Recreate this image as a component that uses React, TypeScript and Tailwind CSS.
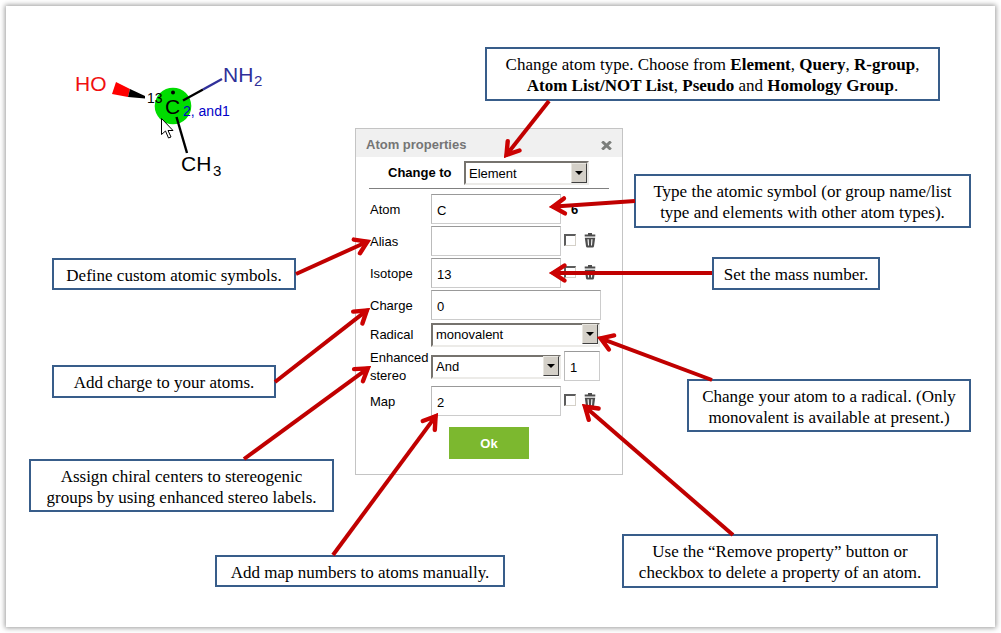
import type { ReactNode } from "react";

type Point = [number, number];

const arrows: { from: Point; to: Point }[] = [
  { from: [549, 101], to: [504, 158] },
  { from: [635, 201], to: [549, 207] },
  { from: [296, 274], to: [371, 240] },
  { from: [712, 273], to: [549, 273] },
  { from: [275, 382], to: [370, 308] },
  { from: [712, 380], to: [597, 337] },
  { from: [244, 459], to: [371, 366] },
  { from: [333, 555], to: [438, 413] },
  { from: [733, 535], to: [582, 404] },
];

function Arrow({ from, to }: { from: Point; to: Point }) {
  const dx = to[0] - from[0];
  const dy = to[1] - from[1];
  const length = Math.hypot(dx, dy);
  const angle = (Math.atan2(dy, dx) * 180) / Math.PI;
  return (
    <g transform={`translate(${to[0]} ${to[1]}) rotate(${angle})`} fill="none" stroke="#c00000" strokeWidth="4">
      <path d={`M${-length} 0H-6`} />
      <path
        d="M-15.5 -7.5L-4 0L-15.5 7.5"
        stroke="#cc0202"
        strokeWidth="4.4"
        strokeLinecap="round"
        strokeLinejoin="miter"
      />
      <path d="M0 0L-11 -5.5V5.5z" fill="#cc0202" stroke="none" />
    </g>
  );
}

function Callout({ place, children }: { place: string; children: ReactNode }) {
  return (
    <p
      className={`absolute flex items-center justify-center whitespace-nowrap border-2 border-[#385d8a] bg-white pt-0.5 text-center font-['Liberation_Serif',serif] text-[17px] leading-[21px] text-black ${place}`}
    >
      <span>{children}</span>
    </p>
  );
}

function TrashIcon() {
  return (
    <svg width="12" height="15" viewBox="0 0 12 15" fill="#4d4d4d" aria-hidden="true">
      <path d="M4 0h4v1.4h3.3v2.2H.7V1.4H4z" />
      <path
        fillRule="evenodd"
        d="M.8 4.8h10.4L10 13.2q-.2 1.3-1.3 1.3H3.3q-1.1 0-1.3-1.3zM3.5 6.2l.5 6.3h1L4.7 6.2zM7.3 6.2L7 12.5h1l.5-6.3z"
      />
    </svg>
  );
}

function Select({ id, options, width }: { id: string; options: string[]; width: string }) {
  return (
    <div className={`relative h-6 ${width}`}>
      <select
        id={id}
        defaultValue={options[0]}
        className="h-full w-full appearance-none border-2 border-t-[#76736e] border-r-[#ecebe8] border-b-[#ecebe8] border-l-[#76736e] bg-white pl-[3px] text-[13px] text-black"
      >
        {options.map((option) => (
          <option key={option}>{option}</option>
        ))}
      </select>
      <span
        aria-hidden="true"
        className="pointer-events-none absolute inset-y-0.5 right-0.5 flex w-4 items-center justify-center border border-t-[#e8e6e0] border-r-[#404040] border-b-[#404040] border-l-[#e8e6e0] bg-[#d4d0c8]"
      >
        <svg width="8" height="4" viewBox="0 0 8 4">
          <path d="M0 0h8L4 4z" />
        </svg>
      </span>
    </div>
  );
}

function TextField({ id, value, width }: { id: string; value: string; width: string }) {
  return (
    <input
      id={id}
      type="text"
      aria-label={id}
      defaultValue={value}
      className={`h-[30px] border border-t-[#999] border-r-[#ccc] border-b-[#ccc] border-l-[#bbb] bg-white px-[5px] pt-0.5 text-[13px] text-black ${width}`}
    />
  );
}

function RemoveProperty({ name }: { name: string }) {
  return (
    <div className="flex items-center gap-2 pb-0.5">
      <input
        type="checkbox"
        aria-label={`Clear ${name}`}
        className="size-3 appearance-none border border-t-2 border-l-2 border-t-[#5c5c5c] border-r-[#d4d0c8] border-b-[#d4d0c8] border-l-[#5c5c5c] bg-white"
      />
      <button type="button" aria-label={`Remove ${name}`}>
        <TrashIcon />
      </button>
    </div>
  );
}

function Row({ label, htmlFor, children }: { label: string; htmlFor: string; children: ReactNode }) {
  return (
    <div className="flex items-center">
      <label htmlFor={htmlFor} className="-mb-px w-[61px] shrink-0 pt-px text-[13px] leading-[18px]">
        {label}
      </label>
      <div className="flex items-center gap-[3px]">{children}</div>
    </div>
  );
}

function AtomDialog() {
  return (
    <section
      aria-labelledby="dialog-title"
      className="absolute top-32 left-[355px] w-[268px] border border-[#c4c4c4] bg-white pb-[15px] text-black"
    >
      <header className="flex h-7 items-center justify-between bg-[#f0f0f0] px-2.5 pt-1">
        <h1 id="dialog-title" className="text-[13px] font-bold text-[#757575]">
          Atom properties
        </h1>
        <button type="button" aria-label="Close">
          <svg width="11" height="9" viewBox="0 0 11 9" stroke="#7c7f7c" strokeWidth="3" aria-hidden="true">
            <path d="M1.2 .5L9.8 8.5M9.8 .5L1.2 8.5" />
          </svg>
        </button>
      </header>
      <form onSubmit={(event) => event.preventDefault()} className="px-3.5">
        <div className="mx-[-1px] flex h-8 items-center border-b border-[#808080]">
          <label htmlFor="change-to" className="w-[95px] pl-[19px] text-[13px] font-bold whitespace-nowrap">
            Change to
          </label>
          <Select id="change-to" width="w-[125px]" options={["Element", "Query", "R-group"]} />
        </div>
        <div className="mt-[5px] flex flex-col gap-0.5">
          <Row label="Atom" htmlFor="atom">
            <TextField id="atom" value="C" width="w-[130px]" />
            <strong className="pt-0.5 pl-[7px] text-[13px]">6</strong>
          </Row>
          <Row label="Alias" htmlFor="alias">
            <TextField id="alias" value="" width="w-[130px]" />
            <RemoveProperty name="alias" />
          </Row>
          <Row label="Isotope" htmlFor="isotope">
            <TextField id="isotope" value="13" width="w-[130px]" />
            <RemoveProperty name="isotope" />
          </Row>
          <Row label="Charge" htmlFor="charge">
            <TextField id="charge" value="0" width="w-[170px]" />
          </Row>
          <Row label="Radical" htmlFor="radical">
            <Select id="radical" width="w-[169px]" options={["monovalent"]} />
          </Row>
          <Row label="Enhanced stereo" htmlFor="stereo">
            <Select id="stereo" width="w-[130px]" options={["And", "Or", "Abs"]} />
            <TextField id="stereo-group" value="1" width="w-9" />
          </Row>
          <Row label="Map" htmlFor="map">
            <TextField id="map" value="2" width="w-[130px]" />
            <RemoveProperty name="map" />
          </Row>
        </div>
        <div className="mt-[11px] flex justify-center">
          <button type="submit" className="h-8 w-20 bg-[#7cb82f] pt-0.5 text-[13px] font-bold text-white">
            Ok
          </button>
        </div>
      </form>
    </section>
  );
}

function Molecule() {
  return (
    <svg
      width="280"
      height="190"
      viewBox="0 0 280 190"
      role="img"
      aria-label="Molecule"
      className="absolute top-0 left-0 font-['Liberation_Sans',sans-serif]"
    >
      <circle cx="173" cy="106" r="18.3" fill="#00dc00" />
      <path d="M116 82L130 89L128 97L112 94z" fill="#ff0000" />
      <path d="M130 89L145 96V98.5L128 97z" />
      <g fill="none" strokeWidth="2.4">
        <path d="M183 100.500L203 89.500" stroke="#000" />
        <path d="M203 89.500L222 79" stroke="#30309a" />
        <path d="M176.500 117L187 153" stroke="#000" />
      </g>
      <circle cx="173" cy="92.5" r="2" />
      <g fontSize="21">
        <text x="75" y="91" fill="#f01010">HO</text>
        <text x="223" y="82" fill="#30309a">NH</text>
        <text x="165" y="114">C</text>
        <text x="181" y="171">CH</text>
      </g>
      <g fontSize="15">
        <text x="254" y="86" fill="#30309a">2</text>
        <text x="213" y="176">3</text>
      </g>
      <g fontSize="14">
        <text x="147" y="103">13</text>
        <text x="183" y="116" fill="#0000c8">2, and1</text>
      </g>
      <path
        d="M161.5 118.5V134.5L165.5 131L168.5 138L171 137L168 130.5H173z"
        fill="#fff"
        stroke="#000"
        strokeWidth="1"
      />
    </svg>
  );
}

export default function App() {
  return (
    <div className="relative flex min-h-screen bg-white p-1.5 font-['Liberation_Sans',sans-serif]">
      <main className="grow bg-white shadow-[0_0_5px_1px_rgba(0,0,0,0.4)]">
        <Molecule />
        <AtomDialog />
        <Callout place="left-[485px] top-[47px] w-[455px] h-[54px]">
          Change atom type. Choose from <b>Element</b>, <b>Query</b>, <b>R-group</b>,<br />
          <b>Atom List/NOT List</b>, <b>Pseudo</b> and <b>Homology Group</b>.
        </Callout>
        <Callout place="left-[634px] top-[174px] w-[337px] h-[54px]">
          Type the atomic symbol (or group name/list
          <br />
          type and elements with other atom types).
        </Callout>
        <Callout place="left-[52px] top-[258px] w-[244px] h-8">Define custom atomic symbols.</Callout>
        <Callout place="left-[712px] top-[257px] w-[168px] h-[33px]">Set the mass number.</Callout>
        <Callout place="left-[52px] top-[365px] w-[224px] h-[33px]">Add charge to your atoms.</Callout>
        <Callout place="left-[687px] top-[379px] w-[284px] h-[53px]">
          Change your atom to a radical. (Only
          <br />
          monovalent is available at present.)
        </Callout>
        <Callout place="left-[29px] top-[459px] w-[305px] h-[53px]">
          Assign chiral centers to stereogenic
          <br />
          groups by using enhanced stereo labels.
        </Callout>
        <Callout place="left-[215px] top-[555px] w-[290px] h-8">Add map numbers to atoms manually.</Callout>
        <Callout place="left-[622px] top-[534px] w-[316px] h-[54px]">
          Use the “Remove property” button or
          <br />
          checkbox to delete a property of an atom.
        </Callout>
        <svg width="980" height="600" viewBox="0 0 980 600" aria-hidden="true" className="pointer-events-none absolute top-0 left-0">
          {arrows.map((arrow) => (
            <Arrow key={arrow.to.join()} {...arrow} />
          ))}
        </svg>
      </main>
    </div>
  );
}
